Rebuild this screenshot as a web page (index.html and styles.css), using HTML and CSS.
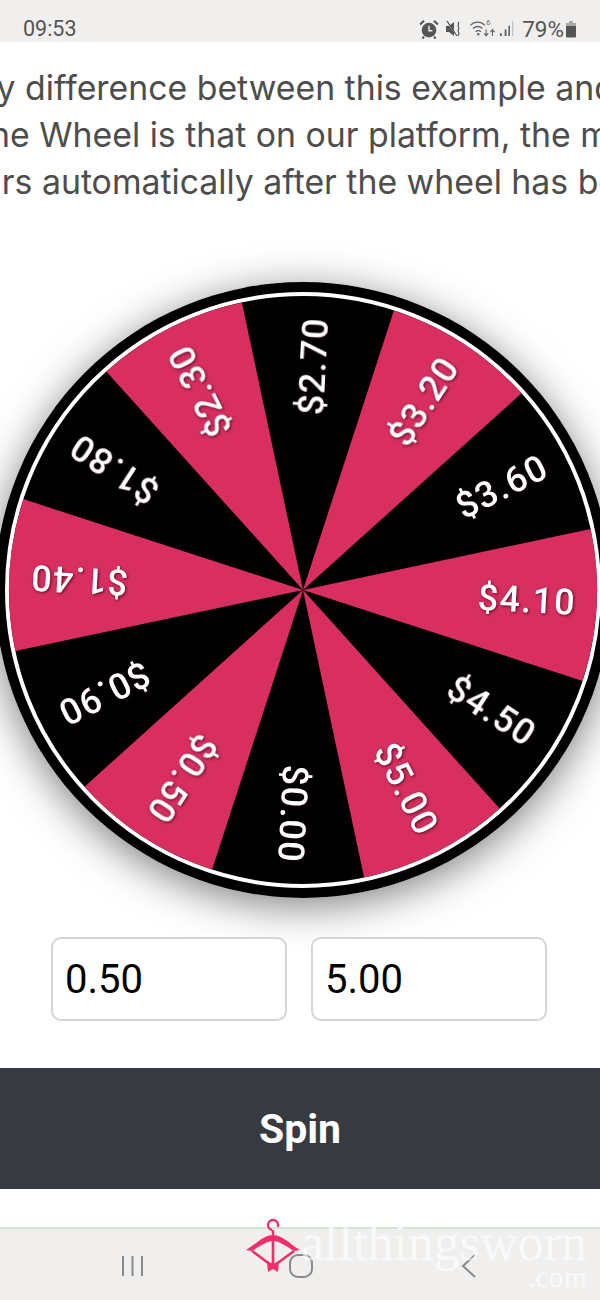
FILE: index.html
```html
<!DOCTYPE html>
<html lang="en">
<head>
<meta charset="utf-8">
<title>Spin the Wheel</title>
<link rel="stylesheet" href="styles.css">
</head>
<body>
<div class="screen">
  <header class="status">
    <span class="clock">09:53</span>
    <div class="status-right">
      <svg class="ico ico-alarm" viewBox="0 0 18 18"><circle cx="9" cy="10" r="6.6" fill="#555"/><path d="M1 5l3.5-3.4M17 5l-3.500-3.4M4.500 16l-1.500 1.500M13.500 16l1.500 1.500" stroke="#555" stroke-width="2" fill="none"/><path d="M9 6v4.500h3" stroke="#f0efee" stroke-width="1.300" fill="none"/></svg>
      <svg class="ico ico-mute" viewBox="0 0 18 18"><path d="M1 6h3l5-4v14l-5-4H1z" fill="#555"/><path d="M2 2l10 14" stroke="#f0efee" stroke-width="1"/><path d="M2 1l10 15" stroke="#555" stroke-width="1.300"/><path d="M13 2c2 2-1 3 .5 5s-1.500 3 0 5 -1 3 0 4" stroke="#555" stroke-width="1.200" fill="none"/></svg>
      <svg class="ico ico-wifi" viewBox="0 0 26 18"><path d="M1 6c4-4 10-4 14 0M3.500 9c3-2.500 6-2.500 9 0M6 12c2-1.500 3-1.500 5 0" stroke="#666" stroke-width="1.200" fill="none"/><circle cx="8.500" cy="14.500" r="1.200" fill="#666"/><path d="M16 16l0-6M14 13.500l2 2.500 2-2.500M22 10v6M20 12.500l2-2.500 2 2.500" stroke="#666" stroke-width="1.100" fill="none"/><text class="wifi-six" x="16" y="6">6</text></svg>
      <svg class="ico ico-signal" viewBox="0 0 16 18"><path d="M1 14h2v3H1zM6 10h2v7H6zM10 6h1.700v11H10z" fill="#666"/><path d="M14 1h1.200v16H14z" fill="#bbb"/></svg>
      <span class="battery-pct">79%</span>
      <svg class="ico ico-batt" viewBox="0 0 11 18"><path d="M3.500 1h4v2h-4z" fill="#aaa"/><path d="M0.500 3h10v3H0.500z" fill="#aaa"/><path d="M0.500 6h10v10.500a1 1 0 0 1-1 1h-8a1 1 0 0 1-1-1z" fill="#555"/></svg>
    </div>
  </header>

  <section class="intro">
    <p class="line line-one">only difference between this example and</p>
    <p class="line line-two">Spin the Wheel is that on our platform, the money</p>
    <p class="line line-three">occurs automatically after the wheel has been spun</p>
  </section>

  <div class="wheel">
    <svg class="wheel-svg" viewBox="-308 -308 616 616">
      <defs>
        <path id="wedge" d="M0 0L90.900 -279.600A294 294 0 0 1 218.500 -196.700Z"/>
      </defs>
      <circle class="rim" r="308"/>
      <circle class="ring" r="296"/>
      <g class="wedges">
        <use href="#wedge"/>
        <use href="#wedge" transform="rotate(60)"/>
        <use href="#wedge" transform="rotate(120)"/>
        <use href="#wedge" transform="rotate(180)"/>
        <use href="#wedge" transform="rotate(240)"/>
        <use href="#wedge" transform="rotate(300)"/>
      </g>
      <g class="labels">
        <text transform="rotate(-87)" x="273" y="10.500">$2.70</text>
        <text transform="rotate(-57)" x="273" y="10.500">$3.20</text>
        <text transform="rotate(-27)" x="273" y="10.500">$3.60</text>
        <text transform="rotate(3)" x="273" y="10.500">$4.10</text>
        <text transform="rotate(33)" x="273" y="10.500">$4.50</text>
        <text transform="rotate(63)" x="273" y="10.500">$5.00</text>
        <text transform="rotate(93)" x="273" y="10.500">$0.00</text>
        <text transform="rotate(123)" x="273" y="10.500">$0.50</text>
        <text transform="rotate(153)" x="273" y="10.500">$0.90</text>
        <text transform="rotate(183)" x="273" y="10.500">$1.40</text>
        <text transform="rotate(213)" x="273" y="10.500">$1.80</text>
        <text transform="rotate(243)" x="273" y="10.500">$2.30</text>
      </g>
    </svg>
  </div>

  <div class="inputs">
    <input class="field" type="text" value="0.50">
    <input class="field" type="text" value="5.00">
  </div>

  <button class="spin" type="button">Spin</button>

  <div class="gap"></div>

  <nav class="navbar">
    <svg class="nav-ico nav-recent" viewBox="0 0 23 22"><path d="M2 1v20M11.500 1v20M21 1v20" stroke="#8a8a8a" stroke-width="2" fill="none"/></svg>
    <svg class="nav-ico nav-home" viewBox="0 0 24 24"><rect x="1" y="1" width="22" height="22" rx="8" stroke="#8a8a8a" stroke-width="2" fill="none"/></svg>
    <svg class="nav-ico nav-back" viewBox="0 0 16 24"><path d="M14 1L2 12l12 11" stroke="#8a8a8a" stroke-width="2" fill="none"/></svg>
  </nav>

  <div class="brand">
    <svg class="brand-mark" viewBox="0 0 56 60">
      <circle cx="27" cy="8" r="5" fill="none" stroke="#ef2f68" stroke-width="2.400" stroke-dasharray="24 8" transform="rotate(100 27 8)"/>
      <path d="M27 13v6" stroke="#ef2f68" stroke-width="2.400"/>
      <path d="M0 33C10 27 18 18 27 18s17 9 27 15l-6 1C40 29 33 24 27 24S14 29 6 34z" fill="#ef2f68"/>
      <path d="M6 34l19 14M48 34L29 48" stroke="#ef2f68" stroke-width="2.600" fill="none"/>
      <path d="M27 22v26" stroke="#ef2f68" stroke-width="2.600"/>
      <path d="M21 44l6 3 6-3-1 11-5-3-5 3z" fill="#ef2f68"/>
    </svg>
    <span class="brand-name">allthingsworn</span>
    <span class="brand-com">.com</span>
  </div>
</div>
</body>
</html>
```
FILE: styles.css
```css
* { box-sizing: border-box; }
html, body { margin: 0; padding: 0; background: #fff; }
.screen {
  position: relative;
  width: 600px;
  height: 1300px;
  overflow: hidden;
  display: flex;
  flex-direction: column;
  font-family: Roboto, "Liberation Sans", sans-serif;
}
.status {
  flex: none;
  height: 42px;
  background: #f0efee;
  display: flex;
  align-items: center;
  justify-content: space-between;
  padding: 15px 23px 0 23px;
  color: #555;
  font-size: 21.500px;
}
.status-right { display: flex; align-items: center; }
.ico { display: block; }
.ico-alarm { width: 20px; height: 20px; margin-right: 6px; }
.ico-mute { width: 18px; height: 18px; margin-right: 6px; }
.ico-wifi { width: 28px; height: 19px; margin-right: 2px; }
.ico-signal { width: 15px; height: 17px; margin-right: 8px; }
.ico-batt { width: 12px; height: 18px; margin-left: 1px; }
.wifi-six { font-size: 7px; fill: #666; }
.battery-pct { font-size: 22.500px; }

.intro { flex: none; padding-top: 22px; height: 204px; }
.line {
  margin: 0;
  height: 47px;
  line-height: 47px;
  white-space: nowrap;
  font-family: Inter, "Liberation Sans", sans-serif;
  font-size: 33.800px;
  color: #4d4d4d;
}
.line-one { margin-left: -52px; }
.line-two { margin-left: -101px; }
.line-three { margin-left: -77px; }

.wheel {
  flex: none;
  width: 616px;
  height: 616px;
  margin: 36px 0 0 -5px;
  border-radius: 50%;
  box-shadow: 0 8px 42px rgba(0, 0, 0, 0.5);
}
.wheel-svg { display: block; width: 616px; height: 616px; }
.rim { fill: #000; }
.ring { fill: #000; stroke: #fff; stroke-width: 4; }
.wedges { fill: #d82e60; }
.labels {
  font-family: Roboto, sans-serif;
  font-weight: 500;
  font-size: 36px;
  letter-spacing: 1.200px;
  fill: #fff;
  text-anchor: end;
  filter: drop-shadow(1px 1px 1.500px rgba(40, 0, 15, 0.7));
}

.inputs {
  flex: none;
  display: flex;
  gap: 24px;
  padding: 39px 0 0 51px;
}
.field {
  width: 236px;
  height: 84px;
  padding: 0 12px;
  border: 2px solid #d4d4d4;
  border-radius: 10px;
  background: #fff;
  color: #000;
  font-family: Roboto, "Liberation Sans", sans-serif;
  font-size: 40px;
  outline: none;
}
.spin {
  flex: none;
  display: block;
  width: 600px;
  height: 121px;
  margin-top: 47px;
  padding: 0;
  border: 0;
  background: #373a3e;
  color: #fff;
  font-family: Roboto, sans-serif;
  font-weight: 700;
  font-size: 41px;
  text-align: center;
}
.gap { flex: none; height: 40px; border-bottom: 2px solid #cfe6d8; }
.navbar {
  flex: 1;
  background: #f0efee;
  position: relative;
}
.nav-ico { position: absolute; display: block; }
.nav-recent { left: 121px; top: 26px; width: 23px; height: 22px; }
.nav-home { left: 289px; top: 25px; width: 24px; height: 24px; }
.nav-back { left: 461px; top: 25px; width: 16px; height: 24px; }

.brand { position: absolute; left: 0; top: 0; width: 600px; height: 1300px; pointer-events: none; }
.brand-mark { position: absolute; left: 246px; top: 1217px; width: 56px; height: 60px; }
.brand-name {
  position: absolute;
  left: 301px;
  top: 1222px;
  font-family: "Liberation Serif", serif;
  font-size: 52px;
  line-height: 42px;
  color: rgba(255, 255, 255, 0.6);
  white-space: nowrap;
}
.brand-com {
  position: absolute;
  right: 13px;
  top: 1266px;
  font-family: "Liberation Serif", serif;
  font-size: 30px;
  line-height: 22px;
  color: rgba(255, 255, 255, 0.6);
}
```
